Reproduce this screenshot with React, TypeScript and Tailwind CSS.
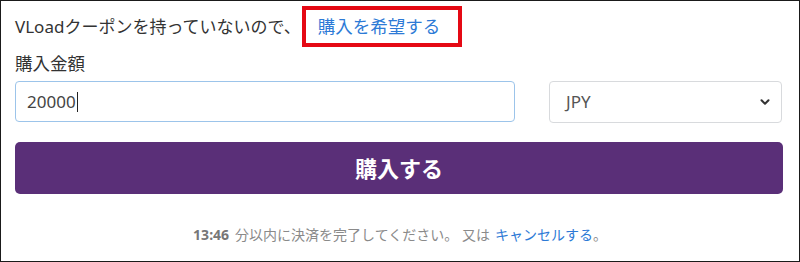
import { ChevronDown } from "lucide-react";

export default function App() {
  const font = { fontFamily: '"Noto Sans", "Noto Sans CJK JP", sans-serif' };

  return (
    <div
      className="w-[800px] h-[262px] border border-[#1a1a1a] bg-white px-[14px] text-[#333]"
      style={font}
    >
      {/* notice line */}
      <div className="mt-[5px] flex h-[41px] items-center text-[17px] leading-none">
        <span>VLoadクーポンを持っていないので、</span>
        <span className="ml-[1px] flex h-[41px] w-[160px] items-center border-[4px] border-[#e50914] pl-[12px]">
          <a href="#" className="text-[17.5px] text-[#2d7ad6]">
            購入を希望する
          </a>
        </span>
      </div>

      {/* amount label */}
      <div className="mt-[5px] flex h-[24px] items-center text-[17.5px] leading-none">購入金額</div>

      {/* amount + currency */}
      <div className="mt-[5px] flex items-start">
        <div className="flex h-[41px] w-[500px] items-center rounded-[4px] border border-[#9cc4ea] pl-[11px] text-[17px] text-[#444]">
          20000<span className="ml-[1px] inline-block h-[20px] w-[1px] bg-[#222]" />
        </div>
        <div className="ml-[34px] flex h-[42px] w-[233px] items-center justify-between rounded-[4px] border border-[#d8dadd] pl-[16px] pr-[9px] text-[17px] text-[#555]">
          <span>JPY</span>
          <ChevronDown className="h-[14px] w-[14px] text-[#333]" strokeWidth={3.5} />
        </div>
      </div>

      {/* submit */}
      <button className="mt-[19px] flex h-[52px] w-[768px] items-center justify-center rounded-[5px] bg-[#5a2f78] text-[22px] font-bold text-white">
        購入する
      </button>

      {/* timer */}
      <div className="mt-[30px] flex h-[20px] items-center justify-center text-[14px] text-[#8a8a8a]">
        <span className="font-bold text-[#777]">13:46</span>
        <span className="ml-[6px]">分以内に決済を完了してください。 又は</span>
        <a href="#" className="ml-[5px] text-[#2d7ad6]">
          キャンセルする
        </a>
        <span>。</span>
      </div>
    </div>
  );
}
